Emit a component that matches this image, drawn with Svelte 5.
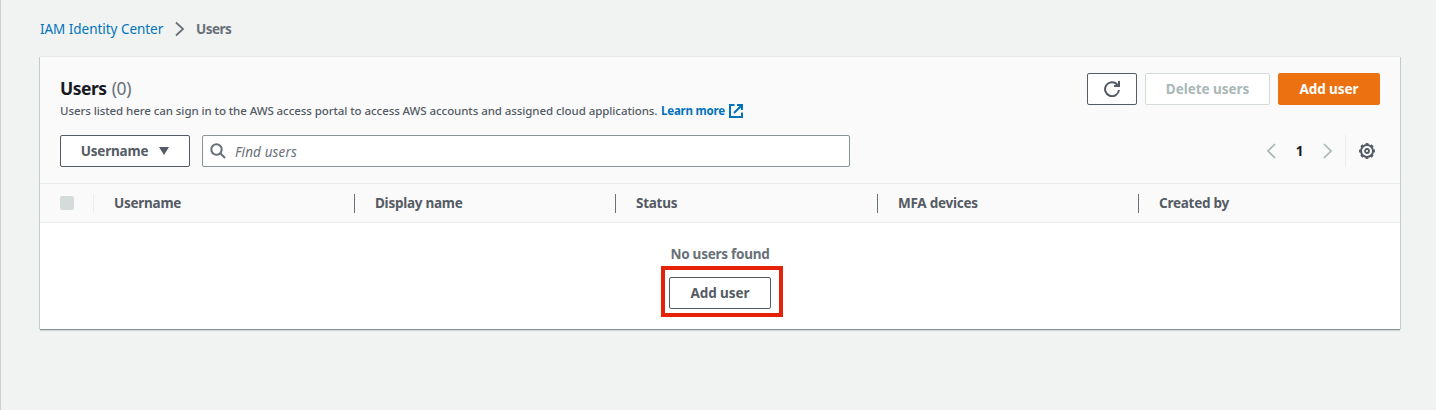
<script>
  const columns = ['Username', 'Display name', 'Status', 'MFA devices', 'Created by'];
</script>

<div class="page">
  <nav class="crumbs">
    <a class="crumb-link" href="#home">IAM Identity Center</a>
    <svg class="crumb-sep" width="10" height="16" viewBox="0 0 10 16"><path d="M1 1.500 8 8 1 14.500" /></svg>
    <span class="crumb-current">Users</span>
  </nav>

  <section class="panel">
    <header class="head">
      <div class="top">
        <div>
          <h1>Users <span class="count">(0)</span></h1>
          <p class="desc"><span class="desc-text">Users listed here can sign in to the AWS access portal to access AWS accounts and assigned cloud applications.</span><a class="learn" href="#learn">Learn more</a><svg class="external" width="14" height="14" viewBox="0 0 14 14"><path d="M5.500 1H1v12h12V8.500M8 1h5v5M12.500 1.500 5 9" /></svg></p>
        </div>
        <div class="actions">
          <button class="btn refresh" aria-label="Refresh">
            <svg width="16" height="16" viewBox="0 0 16 16"><path d="M15 9A7 7 0 1 1 13 3.200L15 5M10 5h5V0" /></svg>
          </button>
          <button class="btn delete" disabled>Delete users</button>
          <button class="btn primary">Add user</button>
        </div>
      </div>

      <div class="tools">
        <button class="btn select"><span>Username</span><svg width="10" height="8" viewBox="0 0 10 8"><path d="M0 0h10L5 8z" /></svg></button>
        <div class="search">
          <svg width="16" height="16" viewBox="0 0 16 16"><circle cx="6.500" cy="6.500" r="5.200" /><path d="m10.300 10.300 4.700 4.700" /></svg>
          <span>Find users</span>
        </div>
        <div class="pager">
          <svg width="9" height="16" viewBox="0 0 9 16"><path d="M8 1 1 8l7 7" /></svg>
          <span class="page-number">1</span>
          <svg width="9" height="16" viewBox="0 0 9 16"><path d="m1 1 7 7-7 7" /></svg>
        </div>
        <div class="settings">
          <svg width="16" height="16" viewBox="0 0 16 16"><circle cx="8" cy="8" r="6" /><circle class="teeth" cx="8" cy="8" r="7" pathLength="80" /><circle class="hub" cx="8" cy="8" r="2" /></svg>
        </div>
      </div>
    </header>

    <div class="columns">
      <div class="check"><span></span></div>
      {#each columns as name}
        <div class="col"><span>{name}</span></div>
      {/each}
    </div>

    <div class="empty">
      <div class="empty-text">No users found</div>
      <div class="highlight"><button class="btn add">Add user</button></div>
    </div>
  </section>
</div>

<style>
  :global(body) { background: #f1f3f3; }
  .page {
    box-sizing: border-box;
    height: 410px;
    padding: 19px 36px 0 39px;
    border-left: 1px solid #c8cdd0;
    background: #f1f3f3;
    font: 14px/20px "Noto Sans", "Open Sans", sans-serif;
    color: #545b64;
  }
  svg { display: block; flex: none; fill: none; stroke: currentColor; stroke-width: 2; }
  a { color: #0073bb; text-decoration: none; }
  .crumbs { display: flex; align-items: center; height: 20px; white-space: nowrap; }
  .crumb-link { width: 135px; font-size: 13.5px; letter-spacing: -.04px; }
  .crumb-sep { width: 10px; margin-right: 11px; color: #687078; stroke-width: 1.8; }
  .crumb-current { color: #687078; font-weight: 700; font-size: 13.5px; letter-spacing: -.5px; }
  .panel {
    width: 1360px;
    height: 272px;
    margin-top: 18px;
    background: #fff;
    box-shadow: 0 1px 0 #879596, 1px 0 0 #c5cbcd, -1px 0 0 #c5cbcd, 0 -1px 0 #e7eaea, 0 2px 1px rgba(0, 28, 36, .12);
  }
  .head { box-sizing: border-box; height: 126px; padding: 16px 20px 0; background: #fafafa; }
  .top { display: flex; justify-content: space-between; height: 62px; }
  h1 { margin: 3px 0 0; height: 24px; font-size: 17.5px; line-height: 24px; letter-spacing: -.5px; color: #16191f; }
  .count { margin-left: 1px; font-weight: 400; letter-spacing: -.3px; color: #687078; }
  .desc { display: flex; margin: 2px 0 0; height: 18px; font-size: 11.5px; line-height: 18px; white-space: nowrap; }
  .desc-text { width: 601px; font-weight: 500; letter-spacing: -.075px; }
  .learn { width: 68px; font-weight: 700; letter-spacing: -.2px; }
  .external { margin-top: 2px; color: #0073bb; }
  .actions { display: flex; gap: 8px; }
  .btn {
    display: flex;
    align-items: center;
    justify-content: center;
    box-sizing: border-box;
    height: 32px;
    padding: 0;
    border: 1px solid #545b64;
    border-radius: 2px;
    background: #fff;
    color: #545b64;
    font: 700 13.5px/20px "Noto Sans", "Open Sans", sans-serif;
    letter-spacing: -.05px;
    white-space: nowrap;
  }
  .refresh { width: 50px; }
  .delete { width: 125px; border-color: #d5dbdb; color: #aab7b8; }
  .primary { width: 102px; border-color: #ec7211; background: #ec7211; color: #fff; }
  .tools { display: flex; align-items: center; height: 32px; }
  .select { width: 130px; gap: 11px; letter-spacing: -.2px; }
  .select svg { fill: currentColor; stroke: none; }
  .search {
    display: flex;
    align-items: center;
    gap: 9px;
    box-sizing: border-box;
    width: 648px;
    height: 32px;
    margin-left: 12px;
    padding-left: 7px;
    border: 1px solid #879596;
    border-radius: 2px;
    background: #fff;
    color: #687078;
  }
  .search span { padding-top: 1px; font-size: 13.5px; font-style: italic; letter-spacing: .12px; }
  .pager { display: flex; align-items: center; justify-content: space-between; width: 65px; margin-left: auto; color: #aab7b8; }
  .pager svg { stroke-width: 1.7; }
  .page-number { color: #16191f; font-size: 13.5px; font-weight: 700; }
  .settings { display: flex; align-items: center; height: 32px; margin-left: 13px; padding: 0 5px 0 13px; border-left: 1px solid #eaeded; }
  .teeth { stroke-dasharray: 5 5; stroke-dashoffset: 2.5; }
  .hub { stroke-width: 1.8; }
  .columns {
    display: grid;
    grid-template-columns: 54px 261px 261px 262px 261px 261px;
    align-items: center;
    box-sizing: border-box;
    height: 40px;
    border-top: 1px solid #eaeded;
    border-bottom: 1px solid #eaeded;
    background: #fafafa;
    font-size: 13.5px;
    font-weight: 700;
    letter-spacing: -.26px;
  }
  .check { box-sizing: border-box; height: 19px; padding: 2px 0 0 20px; border-right: 1px solid #eaeded; }
  .check span { display: block; width: 14px; height: 14px; border-radius: 2px; background: #d5dbdb; }
  .col { box-sizing: border-box; height: 19px; padding-left: 20px; border-right: 1px solid #687078; line-height: 18px; }
  .col:last-child { border: 0; }
  .empty { display: flex; flex-direction: column; align-items: center; padding-top: 21px; }
  .empty-text { height: 22px; color: #687078; font-size: 13.5px; font-weight: 700; letter-spacing: -.25px; }
  .highlight { box-sizing: border-box; width: 122px; height: 51px; margin-left: 4px; padding: 7px 6px 0 4px; border: 4px solid #e52207; }
  .add { width: 102px; }
</style>
